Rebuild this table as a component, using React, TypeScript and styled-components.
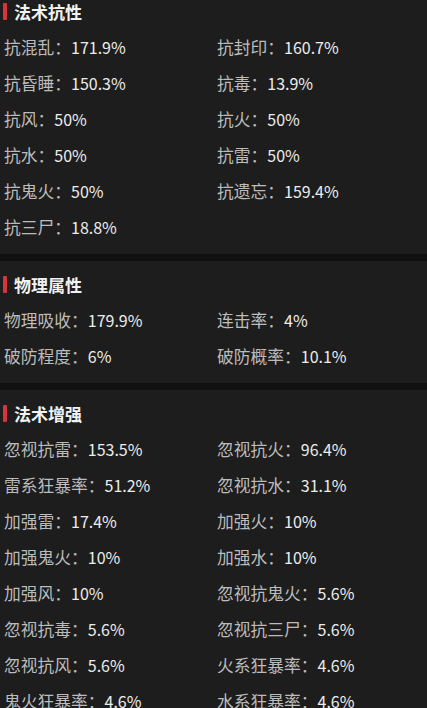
import styled, { createGlobalStyle } from "styled-components";

const GlobalStyle = createGlobalStyle`
  html, body {
    margin: 0;
    padding: 0;
    background: #111111;
    overflow: hidden;
  }
  body {
    font-family: "Noto Sans CJK SC", "Noto Sans", sans-serif;
  }
`;

const Page = styled.div`
  width: 427px;
  margin-top: -12px;
  display: flex;
  flex-direction: column;
  gap: 7px;
  background: #111111;
`;

const Panel = styled.section`
  background: #1d1d1d;
  padding: 6px 0 9px;
`;

const Header = styled.div`
  height: 35px;
  display: flex;
  align-items: center;
  gap: 7px;
  padding-left: 3px;
`;

const Bar = styled.span`
  width: 4px;
  height: 17px;
  border-radius: 1px;
  background: #d8343c;
`;

const Title = styled.h2`
  margin: 0;
  font-size: 17px;
  font-weight: 700;
  color: #f2f2f2;
  line-height: 1;
`;

const Grid = styled.div`
  display: grid;
  grid-template-columns: 213px 1fr;
  padding-left: 4px;
`;

const Item = styled.div`
  height: 36px;
  display: flex;
  align-items: center;
  white-space: nowrap;
`;

const Label = styled.span`
  font-size: 16.75px;
  color: #bcbcbc;
`;

const Value = styled.span`
  font-size: 16px;
  color: #ececec;
`;

type Stat = [string, string];

const sections: { title: string; stats: Stat[] }[] = [
  {
    title: "法术抗性",
    stats: [
      ["抗混乱", "171.9%"],
      ["抗封印", "160.7%"],
      ["抗昏睡", "150.3%"],
      ["抗毒", "13.9%"],
      ["抗风", "50%"],
      ["抗火", "50%"],
      ["抗水", "50%"],
      ["抗雷", "50%"],
      ["抗鬼火", "50%"],
      ["抗遗忘", "159.4%"],
      ["抗三尸", "18.8%"],
    ],
  },
  {
    title: "物理属性",
    stats: [
      ["物理吸收", "179.9%"],
      ["连击率", "4%"],
      ["破防程度", "6%"],
      ["破防概率", "10.1%"],
    ],
  },
  {
    title: "法术增强",
    stats: [
      ["忽视抗雷", "153.5%"],
      ["忽视抗火", "96.4%"],
      ["雷系狂暴率", "51.2%"],
      ["忽视抗水", "31.1%"],
      ["加强雷", "17.4%"],
      ["加强火", "10%"],
      ["加强鬼火", "10%"],
      ["加强水", "10%"],
      ["加强风", "10%"],
      ["忽视抗鬼火", "5.6%"],
      ["忽视抗毒", "5.6%"],
      ["忽视抗三尸", "5.6%"],
      ["忽视抗风", "5.6%"],
      ["火系狂暴率", "4.6%"],
      ["鬼火狂暴率", "4.6%"],
      ["水系狂暴率", "4.6%"],
    ],
  },
];

export default function App() {
  return (
    <>
      <GlobalStyle />
      <Page>
        {sections.map((s) => (
          <Panel key={s.title}>
            <Header>
              <Bar />
              <Title>{s.title}</Title>
            </Header>
            <Grid>
              {s.stats.map(([label, value]) => (
                <Item key={label}>
                  <Label>{label}：</Label>
                  <Value>{value}</Value>
                </Item>
              ))}
            </Grid>
          </Panel>
        ))}
      </Page>
    </>
  );
}
